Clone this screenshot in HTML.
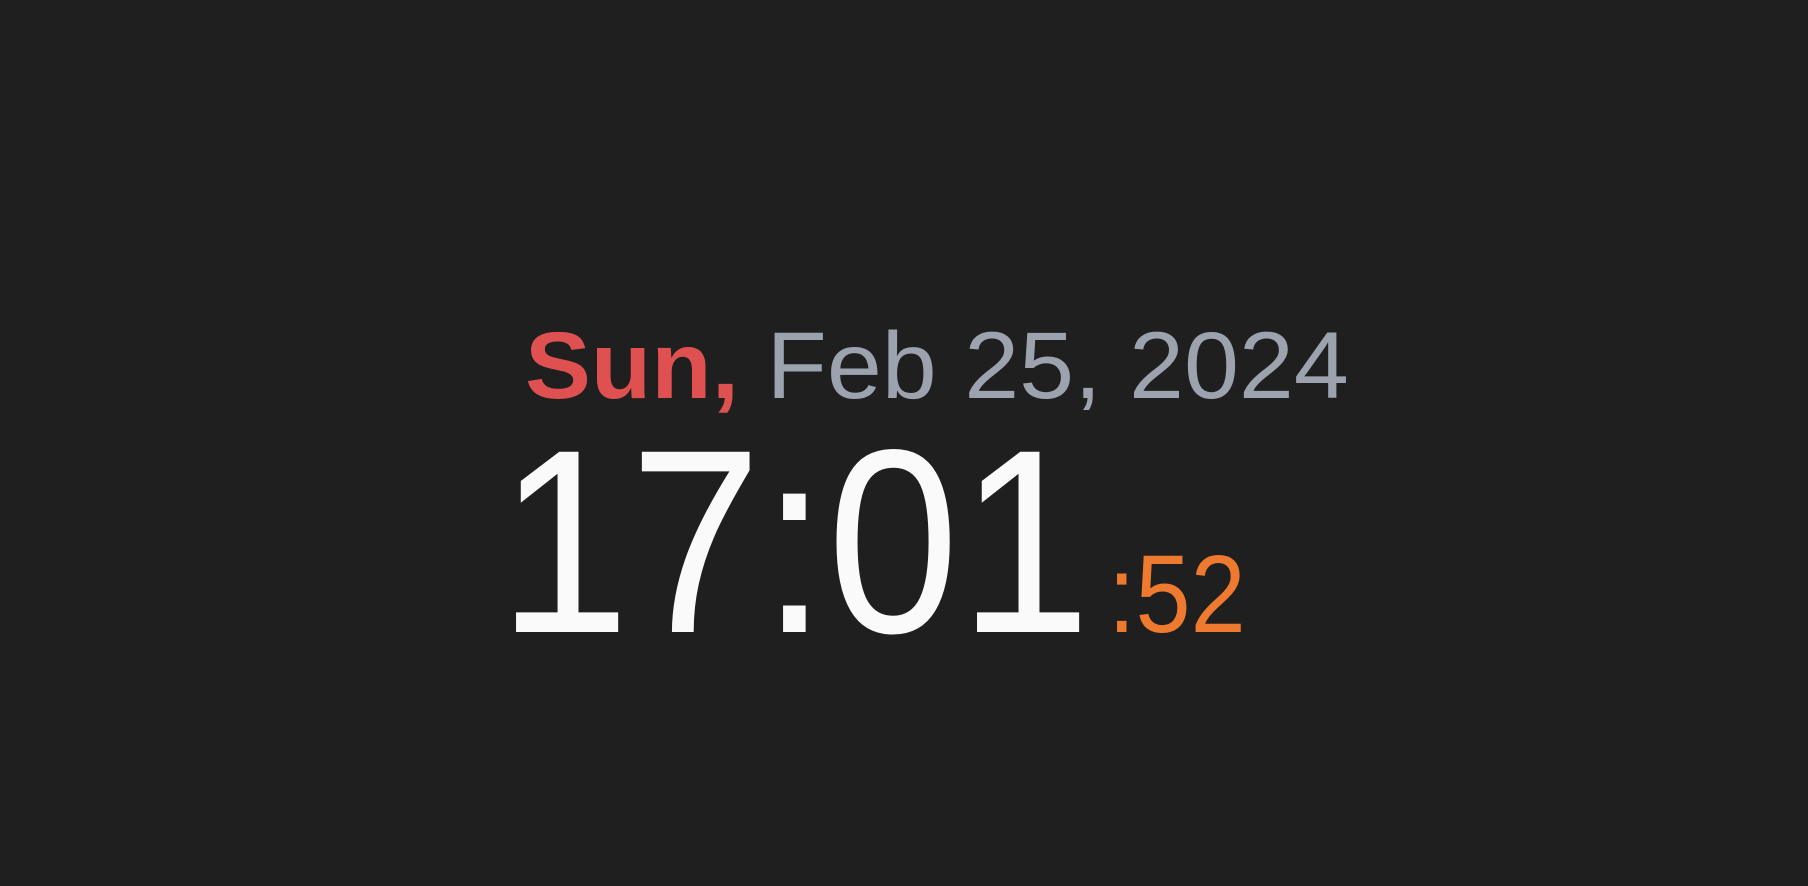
<!DOCTYPE html>
<html><head><meta charset="utf-8"><style>
html,body{margin:0;padding:0;background:#1f1f1f;width:1808px;height:886px;overflow:hidden;font-family:"Liberation Sans",sans-serif}
.a{position:absolute;white-space:nowrap;line-height:1;transform-origin:left top}
</style></head><body>
<div class="a" style="left:525px;top:319px;font-size:95px;transform:scaleX(1.04)"><span style="color:#df5050;font-weight:bold">Sun,</span><span style="color:#9ca3af"> Feb 25, 2024</span></div>
<div class="a" style="left:498px;top:411px;font-size:262px;color:#fafafa;transform:scaleX(0.904)">17:01</div>
<div class="a" style="left:1108px;top:540px;font-size:110px;color:#ee7a30;transform:scaleX(0.9)">:52</div>
</body></html>
